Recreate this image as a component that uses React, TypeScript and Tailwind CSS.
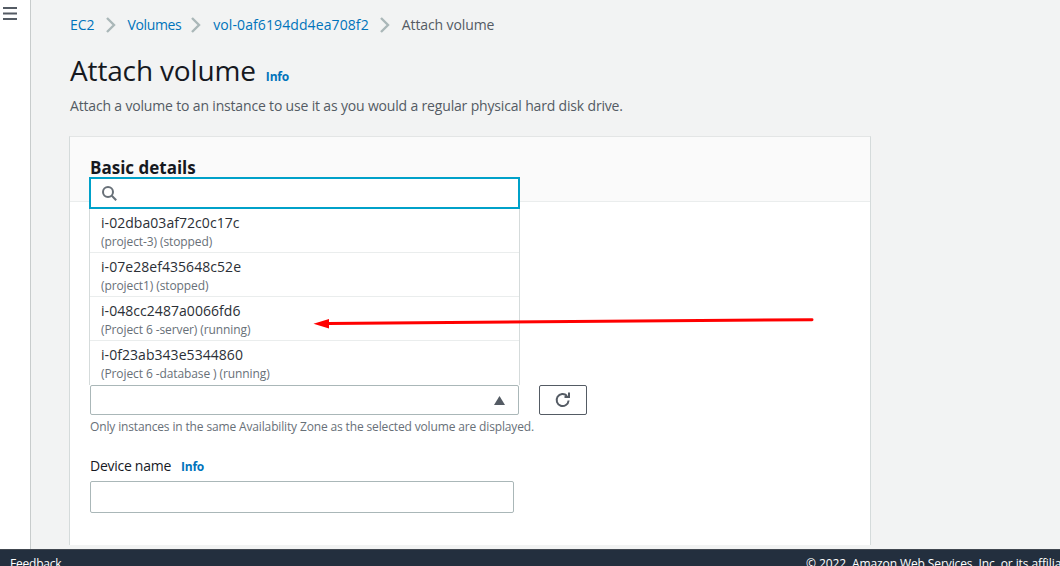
import React from "react";

const options = [
  { id: "i-02dba03af72c0c17c", tag: "(project-3) (stopped)" },
  { id: "i-07e28ef435648c52e", tag: "(project1) (stopped)" },
  { id: "i-048cc2487a0066fd6", tag: "(Project 6 -server) (running)" },
  { id: "i-0f23ab343e5344860", tag: "(Project 6 -database ) (running)" },
];

function Chevron() {
  return (
    <svg width="10" height="16" viewBox="0 0 10 16" className="shrink-0 block" fill="none">
      <path d="M1 1l7 7-7 7" stroke="#aab7b8" strokeWidth="2.4" />
    </svg>
  );
}

export default function App() {
  return (
    <div className="relative w-[1060px] h-[566px] overflow-hidden flex flex-col bg-[#f2f3f3] font-['Open_Sans',sans-serif] text-[#16191f]">
      <div className="flex-1 flex min-h-0">
        <aside className="w-[31px] shrink-0 bg-white border-r border-[#c8cccc] pl-[3px] pt-[7px]">
          <svg width="14" height="13" viewBox="0 0 14 13" className="block">
            <path d="M0 1h14M0 6.5h14M0 12h14" stroke="#545b64" strokeWidth="2" />
          </svg>
        </aside>
        <main className="flex-1 min-w-0 pl-[39px]">
          <nav className="flex items-center h-[20px] mt-[15px] text-[14px] leading-[20px] text-[#0073bb]">
            <span>EC2</span>
            <span className="ml-[11px] mr-[12px]"><Chevron /></span>
            <span className="tracking-[-0.4px]">Volumes</span>
            <span className="ml-[10px] mr-[12px]"><Chevron /></span>
            <span className="tracking-[0.1px]">vol-0af6194dd4ea708f2</span>
            <span className="ml-[11px] mr-[12px]"><Chevron /></span>
            <span className="text-[#545b64] tracking-[-0.1px]">Attach volume</span>
          </nav>
          <div className="flex items-baseline mt-[15px] h-[40px]">
            <h1 className="text-[28px] leading-[40px] font-normal tracking-[-0.15px]">Attach volume</h1>
            <span className="ml-[10px] text-[12px] font-bold text-[#0073bb] tracking-[-0.2px]">Info</span>
          </div>
          <p className="mt-[6px] text-[14px] leading-[20px] text-[#545b64] tracking-[-0.17px]">
            Attach a volume to an instance to use it as you would a regular physical hard disk drive.
          </p>
          <section className="-ml-px mt-[20px] w-[802px] h-[409px] bg-white border-x border-t border-[#e3e5e5] border-x-[#d5dbdb] flex flex-col">
            <header className="h-[65px] shrink-0 bg-[#fafafa] border-b border-[#eaeded] px-[20px] pt-[19px]">
              <h2 className="text-[17px] leading-[24px] font-bold">Basic details</h2>
            </header>
            <div className="flex-1 pl-[20px] pr-[20px] pt-[183px]">
              <div className="flex items-start">
                <div className="relative w-[429px] mr-[20px]">
                  <div className="h-[30px] rounded-[2px] border border-[#aab7b8] bg-white flex items-center justify-end pr-[13px]">
                    <svg width="11" height="9" viewBox="0 0 12 9" preserveAspectRatio="none">
                      <path d="M6 0l6 9H0z" fill="#545b64" />
                    </svg>
                  </div>
                  <div className="absolute -left-px bottom-full w-[431px] bg-white border-x border-[#d5dbdb]">
                    <div className="h-[32px] border-2 border-[#00a1c9] flex items-center pl-[10px] -mx-px">
                      <svg width="17" height="17" viewBox="0 0 17 17" fill="none">
                        <circle cx="7" cy="7" r="5" stroke="#687078" strokeWidth="2" />
                        <path d="M10.8 10.8l4.4 4.4" stroke="#687078" strokeWidth="2" />
                      </svg>
                    </div>
                    {options.map((o, i) => (
                      <div key={o.id} className={`h-[44px] pl-[11px] pt-[4px] ${i < 3 ? "border-b border-[#eaeded]" : ""}`}>
                        <div className="text-[14px] leading-[19px] text-[#2b2f36] tracking-[0.05px]">{o.id}</div>
                        <div className="text-[12px] leading-[16px] mt-[2px] text-[#687078] tracking-[-0.1px]">{o.tag}</div>
                      </div>
                    ))}
                  </div>
                </div>
                <button className="w-[48px] h-[30px] rounded-[2px] border border-[#545b64] bg-white flex items-center justify-center">
                  <svg width="18" height="18" viewBox="0 0 18 18" fill="none">
                    <path d="M14.6 9.5a6 6 0 1 1-1.6-4.6" stroke="#545b64" strokeWidth="2" />
                    <path d="M15 1.5v4.5h-4.5" stroke="#545b64" strokeWidth="2" />
                  </svg>
                </button>
              </div>
              <p className="mt-[4px] text-[12px] leading-[16px] text-[#687078] tracking-[-0.145px]">
                Only instances in the same Availability Zone as the selected volume are displayed.
              </p>
              <div className="mt-[21px] flex items-baseline h-[20px]">
                <label className="text-[14px] leading-[20px] tracking-[-0.27px]">Device name</label>
                <span className="ml-[10px] text-[12px] font-bold text-[#0073bb] tracking-[-0.2px]">Info</span>
              </div>
              <div className="mt-[5px] w-[424px] h-[32px] rounded-[2px] border border-[#aab7b8] bg-white" />
            </div>
          </section>
        </main>
      </div>
      <footer className="h-[17px] shrink-0 bg-[#232f3e] border-t border-[#414750] flex justify-between text-[12px] leading-[16px] text-white pl-[10px] whitespace-nowrap overflow-hidden pt-[6px]">
        <span className="tracking-[-0.2px]">Feedback</span>
        <span className="w-[254px] shrink-0 overflow-hidden tracking-[-0.1px]">© 2022, Amazon Web Services, Inc. or its affiliates.</span>
      </footer>
      <svg className="absolute left-[300px] top-[305px] pointer-events-none" width="530" height="35" viewBox="0 0 530 35" fill="none">
        <path d="M28 18.5L512 14.7" stroke="#ff0000" strokeWidth="3" strokeLinecap="round" />
        <path d="M13.5 18.7L29 14v9.5z" fill="#ff0000" />
      </svg>
    </div>
  );
}
